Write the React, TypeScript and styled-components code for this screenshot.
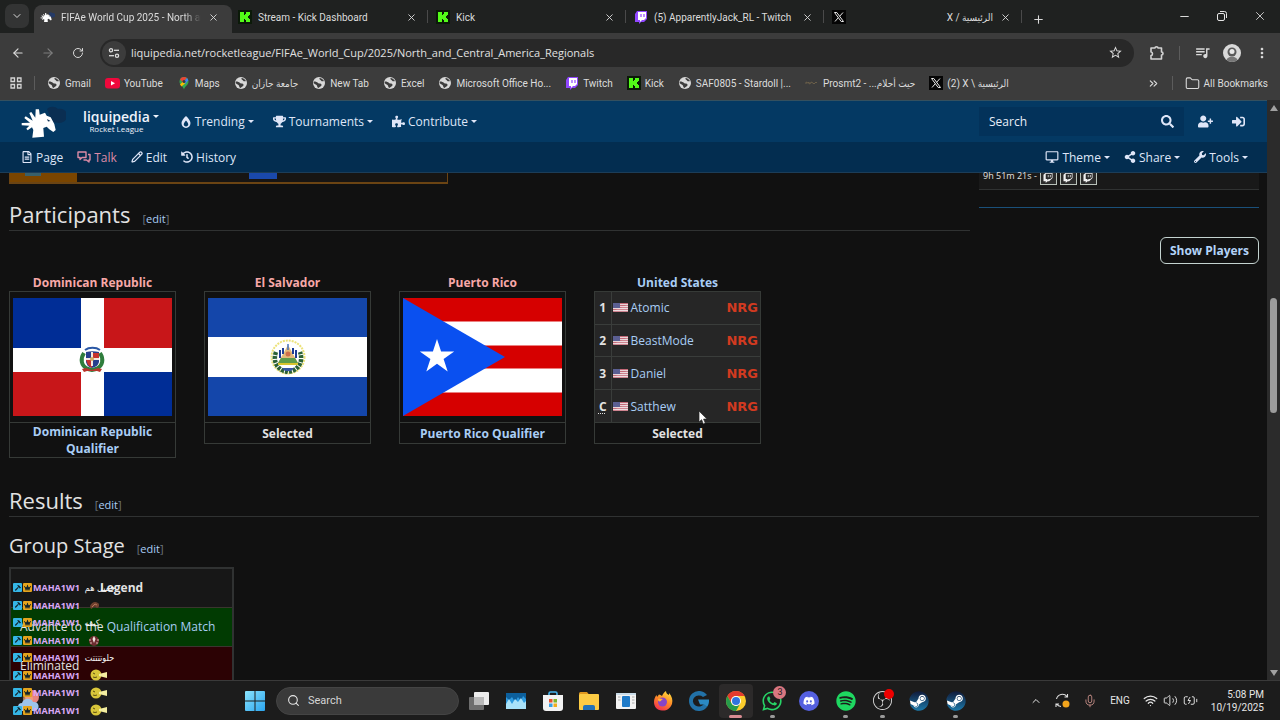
import React from 'react';
import styled, { createGlobalStyle } from 'styled-components';
import {
  FaBurn, FaTrophy, FaPuzzlePiece, FaSearch, FaUserPlus, FaSignInAlt, FaRegFileAlt,
  FaHistory, FaShareAlt, FaWrench, FaWhatsapp, FaDiscord, FaSpotify, FaSteam, FaTwitch, FaCrown, FaHammer,
} from 'react-icons/fa';
import {
  MdOutlineDesktopWindows, MdOutlineQueueMusic, MdStarOutline, MdMoreVert,
} from 'react-icons/md';
import {
  ArrowLeft, ArrowRight, RotateCw, X, Plus, Minus, ChevronDown, ChevronUp, Folder, Pencil, Mic, Wifi,
  Volume2, Search, BatteryCharging, ChevronsRight,
} from 'lucide-react';
import { SiObsstudio } from 'react-icons/si';

const UI = `Roboto, "DejaVu Sans Condensed", sans-serif`;
const WEB = `"Open Sans", "Noto Sans", sans-serif`;

const GlobalStyle = createGlobalStyle`
  *, *::before, *::after { box-sizing: border-box; }
  body { margin: 0; background: #111; color: #e2e2e2; font-family: ${WEB}; font-size: 12px; }
  button, input { font: inherit; color: inherit; background: none; border: 0; padding: 0; margin: 0; }
  a { color: #a9cdf5; text-decoration: none; }
  h1, h2, h3, p, ul { margin: 0; padding: 0; font-weight: 400; list-style: none; }
  svg { display: block; flex: none; }
`;

/* ---------- layout shell ---------- */
const Screen = styled.div`
  position: relative;
  height: 100vh;
  display: flex;
  flex-direction: column;
  overflow: hidden;
`;
const Browser = styled.div`
  background: #3c3c3c;
  color: #dcdcdc;
  font-family: ${UI};
  font-size: 10px;
`;
const IconButton = styled.button<{ $size?: number; $dim?: boolean }>`
  display: flex;
  align-items: center;
  justify-content: center;
  flex: none;
  width: ${(p) => p.$size ?? 24}px;
  height: ${(p) => p.$size ?? 24}px;
  color: ${(p) => (p.$dim ? '#7d7d7d' : '#dadada')};
`;

/* ---------- tab strip ---------- */
const TabStrip = styled.div`
  display: flex;
  align-items: flex-end;
  height: 33px;
  padding-left: 5px;
  background: #1f2120;
`;
const TabSearch = styled(IconButton)`
  margin: 0 5px 5px 0;
  border-radius: 7px;
  background: #333434;
`;
const Tab = styled.div<{ $active?: boolean; $divider?: boolean }>`
  position: relative;
  display: flex;
  align-items: center;
  gap: 6px;
  flex: 0 1 198px;
  min-width: 0;
  height: 28px;
  padding: 0 13px 4px 6px;
  border-radius: 8px 8px 0 0;
  background: ${(p) => (p.$active ? '#3c3c3c' : 'transparent')};
  &::after {
    content: '';
    display: ${(p) => (p.$divider ? 'block' : 'none')};
    position: absolute;
    right: 2px;
    top: 5px;
    width: 1px;
    height: 13px;
    background: #4a4a4a;
  }
`;
const TabTitle = styled.span<{ $fade?: boolean }>`
  flex: 1;
  min-width: 0;
  overflow: hidden;
  white-space: nowrap;
  ${(p) => p.$fade && 'mask-image: linear-gradient(90deg, #000 88%, transparent);'}
`;
const WindowControls = styled.div`
  display: flex;
  gap: 14px;
  margin-left: auto;
  padding: 0 8px 5px 0;
`;

/* ---------- toolbar ---------- */
const Toolbar = styled.div`
  display: flex;
  align-items: center;
  gap: 6px;
  height: 39px;
  padding: 0 6px;
`;
const Omnibox = styled.label`
  display: flex;
  align-items: center;
  flex: 1;
  height: 28px;
  margin: 0 5px 0 4px;
  padding: 0 7px 0 2px;
  border-radius: 14px;
  background: #282828;
`;
const SiteInfo = styled(IconButton)`
  border-radius: 50%;
  background: #3c3c3c;
`;
const Url = styled.input`
  flex: 1;
  min-width: 0;
  margin-left: 5px;
  font-family: ${WEB};
  font-size: 11px;
  color: #e0e0e0;
  outline: none;
`;
const Divider = styled.span<{ $space?: number }>`
  width: 1px;
  height: 14px;
  margin: 0 ${(p) => p.$space ?? 0}px;
  background: #5c5c5c;
`;
const Avatar = styled.span`
  display: block;
  width: 18px;
  height: 18px;
  border-radius: 50%;
  overflow: hidden;
  background: #d9d9d9;
`;

/* ---------- bookmarks ---------- */
const Bookmarks = styled.nav`
  display: flex;
  align-items: center;
  gap: 12px;
  height: 28px;
  padding: 0 12px 6px 10px;
  white-space: nowrap;
`;
const BookmarkList = styled.div`
  display: flex;
  gap: 14px;
`;
const Bookmark = styled.a`
  display: flex;
  align-items: center;
  gap: 4px;
  color: #dcdcdc;
`;
const BookmarksEnd = styled.div`
  display: flex;
  align-items: center;
  gap: 12px;
  margin-left: auto;
`;

/* ---------- wiki header ---------- */
const Viewport = styled.div`
  display: flex;
  flex: 1;
  min-height: 0;
`;
const Page = styled.div`
  flex: 1;
  min-width: 0;
  overflow: hidden;
  background: #111;
`;
const TopNav = styled.header`
  display: flex;
  align-items: center;
  height: 42px;
  padding: 0 22px 0 20px;
  border-top: 1px solid #34505f;
  background: #043963;
  color: #eef3fb;
`;
const SubNav = styled.nav`
  display: flex;
  align-items: center;
  justify-content: space-between;
  height: 31px;
  padding: 0 19px 0 21px;
  border-bottom: 1px solid #1c3d58;
  background: #032d50;
`;
const NavGroup = styled.div<{ $gap: number }>`
  display: flex;
  align-items: center;
  gap: ${(p) => p.$gap}px;
`;
const NavItem = styled.a<{ $tone?: string }>`
  display: flex;
  align-items: center;
  gap: 3px;
  color: ${(p) => p.$tone ?? '#dfe6f8'};
`;
const Caret = styled.span`
  border: 3px solid transparent;
  border-top-color: currentColor;
  border-bottom: 0;
`;
const Brand = styled.a`
  display: grid;
  grid-template-columns: auto auto;
  align-items: center;
  column-gap: 3px;
  margin: 0 21px 0 17px;
  color: #eef3fb;
`;
const BrandName = styled.strong`
  font-size: 14px;
  line-height: 15px;
  font-weight: 600;
`;
const BrandGame = styled.span`
  font-size: 8px;
  line-height: 10px;
  text-align: center;
`;
const SearchBox = styled.label`
  display: flex;
  align-items: center;
  width: 205px;
  height: 29px;
  margin: 0 14px 0 auto;
  padding: 0 10px;
  background: #03325a;
`;
const SearchInput = styled.input`
  flex: 1;
  min-width: 0;
  outline: none;
  &::placeholder { color: #e8eef8; opacity: 1; }
`;

/* ---------- article ---------- */
const Article = styled.main`
  padding: 0 8px 0 9px;
`;
const Lead = styled.div`
  display: grid;
  grid-template-columns: minmax(0, 1fr) 280px;
  column-gap: 9px;
`;
const PrizeRow = styled.div`
  display: grid;
  grid-template-columns: 67px 172px 28px 1fr;
  width: 439px;
  height: 11px;
  border: solid #6b4413;
  border-width: 0 1px 2px 1px;
  background: #171513;
`;
const PrizeCell = styled.span<{ $kind: 'place' | 'plain' | 'flag' }>`
  display: flex;
  justify-content: center;
  margin-bottom: ${(p) => (p.$kind === 'flag' ? 3 : 0)}px;
  background: ${(p) => ({ place: '#7a4500', plain: 'transparent', flag: '#1a49ab' })[p.$kind]};
`;
const PrizeMark = styled.span`
  width: 16px;
  height: 3px;
  margin-right: 22px;
  background: #38606b;
`;
const Infobox = styled.aside`
  align-self: start;
  padding-bottom: 17px;
  border-bottom: 1px solid #1a507a;
`;
const Countdown = styled.div`
  display: flex;
  gap: 3px;
  height: 17px;
  padding: 0 4px;
  border-bottom: 1px solid #303232;
  background: #191919;
  font-size: 9px;
  line-height: 5px;
`;
const StreamBadge = styled.a`
  display: flex;
  justify-content: center;
  width: 17px;
  height: 12px;
  border: 1px solid #b9c2ba;
  border-top: 0;
  background: #2c2c2c;
  color: #f0f0f0;
`;
const SectionHead = styled.div<{ $rule?: boolean; $space: number }>`
  display: flex;
  align-items: baseline;
  gap: 12px;
  margin-top: ${(p) => p.$space}px;
  border-bottom: ${(p) => (p.$rule ? '1px solid #303232' : '0')};
`;
const Heading = styled.h2<{ $minor?: boolean }>`
  font-size: ${(p) => (p.$minor ? 20 : 22)}px;
  line-height: 32px;
`;
const EditLink = styled.span`
  font-size: 11px;
  line-height: 14px;
  color: #707880;
`;
const Actions = styled.div`
  display: flex;
  justify-content: flex-end;
  margin-top: 6px;
`;
const OutlineButton = styled.button`
  height: 27px;
  padding: 0 9px;
  border: 1px solid #c4d3d0;
  border-radius: 6px;
  font-weight: 700;
  color: #b3d3f8;
`;
const Cards = styled.div`
  display: flex;
  flex-wrap: wrap;
  gap: 28px;
  align-items: flex-start;
  margin-top: 10px;
`;
const Card = styled.section`
  width: 167px;
  text-align: center;
  font-weight: 700;
  line-height: 17px;
`;
const CardTitle = styled.a<{ $missing?: boolean }>`
  display: block;
  color: ${(p) => (p.$missing ? '#f7a8a8' : '#a9cdf5')};
`;
const CardBox = styled.div`
  border: 1px solid #363a37;
`;
const Media = styled.div`
  display: flex;
  justify-content: center;
  padding: 6px 0;
`;
const CardFooter = styled.div`
  display: grid;
  align-content: center;
  min-height: 21px;
  padding: 0 12px;
  border-top: 1px solid #363a37;
`;
const Roster = styled.table`
  width: 100%;
  height: 130px;
  border-collapse: collapse;
  background: #262626;
  font-weight: 400;
  text-align: left;
  tr + tr { border-top: 1px solid #3a3d3b; }
  th { width: 16px; padding: 0; border-right: 1px solid #3a3d3b; text-align: center; }
  td { padding: 0 2px 0 1px; }
  abbr { text-decoration: underline dotted; text-underline-offset: 2px; }
`;
const Player = styled.div`
  display: flex;
  align-items: center;
  gap: 3px;
`;
const TeamMark = styled.a`
  margin-left: auto;
  font: 700 13px "DejaVu Sans", sans-serif;
  color: #d23a20;
`;
const LegendTable = styled.table`
  width: 225px;
  margin-top: 5px;
  border-collapse: collapse;
  border: 2px solid #303232;
  border-bottom: 0;
`;
const LegendRow = styled.tr<{ $bg?: string }>`
  height: 39px;
  background: ${(p) => p.$bg ?? '#171717'};
  th, td { padding: 0 9px; border-bottom: 1px solid #3b352f; white-space: nowrap; }
`;

/* ---------- scrollbar ---------- */
const ScrollTrack = styled.div`
  display: flex;
  flex-direction: column;
  align-items: center;
  justify-content: space-between;
  width: 13px;
  padding: 5px 0 4px;
  background: #2b2b2b;
`;
const ScrollArrow = styled.span<{ $down?: boolean }>`
  border: 4px solid transparent;
  border-${(p) => (p.$down ? 'top' : 'bottom')}: 6px solid #a0a0a0;
  border-${(p) => (p.$down ? 'bottom' : 'top')}: 0;
`;
const ScrollThumb = styled.span`
  width: 7px;
  height: 115px;
  margin-bottom: 70px;
  border-radius: 4px;
  background: #9c9c9c;
`;

/* ---------- taskbar ---------- */
const Taskbar = styled.footer`
  display: flex;
  align-items: center;
  height: 40px;
  padding: 0 16px 0 18px;
  border-top: 1px solid #3a3a3a;
  background: #1c1c1c;
  color: #e6e6e6;
  font-family: ${UI};
  font-size: 10px;
`;
const Weather = styled(IconButton)`
  margin-right: 198px;
`;
const TaskSearch = styled.label`
  display: flex;
  align-items: center;
  gap: 8px;
  width: 183px;
  height: 28px;
  margin: 0 2px 0 4px;
  padding: 0 10px;
  border: 1px solid #444;
  border-radius: 14px;
  background: #3a3a3a;
`;
const TaskSearchInput = styled.input`
  width: 100%;
  font-size: 11px;
  outline: none;
  &::placeholder { color: #d5d5d5; opacity: 1; }
`;
const Apps = styled.div`
  display: grid;
  grid-template-columns: repeat(14, 1fr);
  width: 513px;
`;
const AppButton = styled.button<{ $active?: boolean; $running?: boolean }>`
  position: relative;
  display: flex;
  align-items: center;
  justify-content: center;
  justify-self: center;
  width: 34px;
  height: 34px;
  border-radius: 4px;
  background: ${(p) => (p.$active ? '#2c2a2a' : 'transparent')};
  &::after {
    content: '';
    display: ${(p) => (p.$running || p.$active ? 'block' : 'none')};
    position: absolute;
    bottom: 0;
    width: ${(p) => (p.$active ? 13 : 5)}px;
    height: 3px;
    border-radius: 2px;
    background: ${(p) => (p.$active ? '#d98c92' : '#9a9a9a')};
  }
`;
const CountBadge = styled.span<{ $solid?: boolean }>`
  position: absolute;
  top: ${(p) => (p.$solid ? 5 : 2)}px;
  right: ${(p) => (p.$solid ? 5 : 3)}px;
  width: ${(p) => (p.$solid ? 10 : 13)}px;
  height: ${(p) => (p.$solid ? 10 : 13)}px;
  border-radius: 50%;
  background: ${(p) => (p.$solid ? '#f00000' : '#d97680')};
  color: #1c1c1c;
  font-size: 9px;
  line-height: 13px;
`;
const Tray = styled.div`
  display: flex;
  align-items: center;
  gap: 13px;
  margin-left: auto;
`;
const TrayStatus = styled.div`
  display: flex;
  gap: 5px;
`;
const Clock = styled.time`
  text-align: right;
  line-height: 13px;
`;

/* ---------- floating layers ---------- */
const ChatOverlay = styled.ul`
  position: absolute;
  left: 13px;
  bottom: 1px;
  display: grid;
  grid-auto-rows: 1fr;
  height: 140px;
  font-size: 9px;
`;
const ChatLine = styled.li`
  display: flex;
  align-items: center;
`;
const ChatBadge = styled.span<{ $bg: string }>`
  display: flex;
  align-items: center;
  justify-content: center;
  width: 9px;
  height: 9px;
  margin-right: 1px;
  border-radius: 1px;
  background: ${(p) => p.$bg};
  color: #12242c;
`;
const ChatName = styled.strong`
  margin-right: 5px;
  color: #d9a9f7;
`;
const ChatText = styled.span`
  font: 400 9px/14px "DejaVu Sans Condensed", sans-serif;
  color: #f4f4f4;
`;
const Pointer = styled.svg`
  position: absolute;
  left: 698px;
  top: 410px;
`;

/* ---------- drawings ---------- */
const KickIcon = () => (
  <svg width="14" height="14" viewBox="0 0 14 14">
    <rect width="14" height="14" fill="#0b1a08" />
    <path d="M2 2h4v3h1V4h1V2h4v3h-1v1h-1v2h1v1h1v3H8v-2H7V9H6v3H2z" fill="#53fc18" />
  </svg>
);
const TwitchIcon = () => (
  <svg width="14" height="14" viewBox="0 0 14 14">
    <path d="M3 1h10v8l-3 3H7l-2 2v-2H1V4z" fill="#9147ff" />
    <path d="M4 2h8v6l-2 2H8l-2 2v-2H4z" fill="#fff" />
    <path d="M7 4v3M10 4v3" stroke="#9147ff" strokeWidth="1.2" />
  </svg>
);
const XIcon = () => (
  <svg width="14" height="14" viewBox="0 0 14 14">
    <rect width="14" height="14" fill="#050505" />
    <path d="M2.500 2.500h2.300l6.700 9H9.200z" fill="none" stroke="#e8e8e8" />
    <path d="M11 2.500 7.600 6.300M6.200 7.800 3 11.500" stroke="#e8e8e8" />
  </svg>
);
const GlobeIcon = () => (
  <svg width="14" height="14" viewBox="0 0 14 14">
    <circle cx="7" cy="7" r="6" fill="#d8d8d8" />
    <path d="M2 5.500c2 0 3 .5 4 1.500s3 0 3.500 1.500S8 10.500 6.500 12C5 11.800 5.500 10 4.500 9S2 8 1.500 7zM7.500 2c-.5 1.500 1 1.500 1.500 2.500s2 1 3 .5C11 3.500 9.500 2 7.500 2z" fill="#3c3c3c" />
  </svg>
);
const YouTubeIcon = () => (
  <svg width="15" height="14" viewBox="0 0 15 14">
    <rect y="2" width="15" height="10.500" rx="3" fill="#f0083c" />
    <path d="M6 5v4.500l4-2.200z" fill="#fff" />
  </svg>
);
const MapsIcon = () => (
  <svg width="14" height="14" viewBox="0 0 14 14">
    <path d="M7 1a4.500 4.500 0 0 1 4.500 4.500C11.500 9 8 10 7 13.500 6 10 2.500 9 2.500 5.500A4.500 4.500 0 0 1 7 1z" fill="#34a853" />
    <path d="M7 1a4.500 4.500 0 0 0-4 2.300L5.500 6 10 2.100A4.500 4.500 0 0 0 7 1z" fill="#ea4335" />
    <path d="m10 2-4 4.500 2 1.500 3.300-3.500C11 3.200 10.600 2.600 10 2z" fill="#4285f4" />
    <path d="M3 8.500 6 5.500l2 2-3.500 3z" fill="#fbbc04" />
    <circle cx="7" cy="5.500" r="1.500" fill="#3c3c3c" />
  </svg>
);
const FaintIcon = () => (
  <svg width="14" height="14" viewBox="0 0 14 14">
    <path d="M1 8V6l2 1 1-1v2l2-1V6l2 1 1 1 2-2 1 1" fill="none" stroke="#6b5f48" />
  </svg>
);
const AppsGridIcon = () => (
  <svg width="12" height="12" viewBox="0 0 12 12" fill="none" stroke="#d4d4d4" strokeWidth="1.300">
    <path d="M1 1h3.500v3.500H1zM7.500 1H11v3.500H7.500zM1 7.500h3.500V11H1zM7.500 7.500H11V11H7.500z" />
  </svg>
);
const TuneIcon = () => (
  <svg width="12" height="12" viewBox="0 0 12 12" fill="none" stroke="#dcdcdc" strokeWidth="1.300">
    <circle cx="3" cy="3.300" r="1.600" /><path d="M6 3.300h5" /><circle cx="9" cy="8.700" r="1.600" /><path d="M1 8.700h5" />
  </svg>
);
const ExtensionsIcon = () => (
  <svg width="16" height="16" viewBox="0 0 16 16" fill="none" stroke="#d4d4d4" strokeWidth="1.600" strokeLinejoin="round">
    <path d="M2 3h4c0-1.600 3-1.600 3 0h3.500v4c2 0 2 3 0 3v4H2v-3.500c2 0 2-3.500 0-3.500z" />
  </svg>
);
const RestoreIcon = () => (
  <svg width="10" height="10" viewBox="0 0 10 10" fill="none" stroke="#e6e6e6">
    <rect x=".5" y="2.500" width="7" height="7" rx="1.500" /><path d="M3 .5h4.500a2 2 0 0 1 2 2V7" />
  </svg>
);
const TalkIcon = () => (
  <svg width="14" height="12" viewBox="0 0 14 12" fill="none" stroke="#dc8ba6" strokeWidth="1.400" strokeLinejoin="round">
    <path d="M1 1h8v5.500H5L3 8.500v-2H1z" /><path d="M11 3.500h2V9h-1v2L9.500 9H6.500" />
  </svg>
);
const HorseHead = ({ size, fill, shade }: { size: number; fill: string; shade: string }) => (
  <svg width={size} height={(size * 32) / 46} viewBox="0 0 46 32">
    <path d="M27 3c3-3 8-3 11 0 4-1 8 1 9 5 1 5-3 9-8 9l-6-1-3-6z" fill={shade} />
    <path d="M15.700 3.300 19 3.300 19.700 8.700 25 6.700 26.700 9.700 30.700 11.300 34.300 18 35.700 24 33.300 26 29.300 23.300 26.700 20.700 23.300 22 24 30.700 12.300 31.700 13.300 24 12 21.300 7.700 24.300 6.300 22.700 9.300 19.700 1.700 19.300 1.700 17 10 16.700 4.300 12 5.700 10.300 12.700 14.700 9.300 7 11.300 6 15.300 11.700z" fill={fill} />
    <path d="m27 13 3.500 2-2.500.5z" fill={shade} />
  </svg>
);
const UsFlag = () => (
  <svg width="15" height="9" viewBox="0 0 15 9">
    <rect width="15" height="9" fill="#e9d5d8" />
    <path d="M0 .5h15M0 2.500h15M0 4.500h15M0 6.500h15M0 8.500h15" stroke="#c46a78" />
    <rect width="7" height="5" fill="#5b5f92" />
    <path d="M0 9C5 4 10 5 15 1v8z" fill="#fff" opacity=".18" />
  </svg>
);
const DominicanFlag = () => (
  <svg width="159" height="118" viewBox="0 0 159 118" role="img" aria-label="Dominican Republic">
    <rect width="159" height="118" fill="#fff" />
    <path d="M0 0h68v50H0zM91 74h68v44H91z" fill="#002d96" />
    <path d="M91 0h68v50H91zM0 74h68v44H0z" fill="#c81619" />
    <path d="M71 55c-4 6-3 13 4 16l4 1 4-1c7-3 8-10 4-16" fill="none" stroke="#2f7d3c" strokeWidth="4" />
    <path d="M73 54c4-1 9-1 13 0v10c-1 4-4 5-7 6-3-1-5-2-6-6z" fill="#263f8c" />
    <path d="M79 55h7v6h-7zM73 62h6v8l-4-3z" fill="#c7332e" />
    <path d="M73 60h13v2H73zM78 54h2v14h-2z" fill="#f3e7df" /><circle cx="79" cy="61" r="2" fill="#d3ac62" />
    <path d="M72 52c4-3 11-3 15 0" fill="none" stroke="#2a57a5" strokeWidth="2" />
    <path d="m69 71 4-1 6 2 6-2 4 1-2 3-3-1h-10l-3 1z" fill="#b5352b" />
  </svg>
);
const SalvadorFlag = () => (
  <svg width="159" height="118" viewBox="0 0 159 118" role="img" aria-label="El Salvador">
    <rect width="159" height="118" fill="#1446aa" />
    <rect y="39" width="159" height="40" fill="#fff" />
    <circle cx="80" cy="59" r="16.500" fill="none" stroke="#ece27a" strokeWidth="2" strokeDasharray="2 1" />
    <path d="M68 54c-3 8 0 16 8 19l4 1 4-1c8-3 11-11 8-19" fill="none" stroke="#2c6136" strokeWidth="4.500" strokeDasharray="3 1" />
    <path d="m80 47 10 18H70z" fill="#e2b97a" />
    <path d="M73 60h14l3 5H70z" fill="#5f9c4a" /><path d="M70 65h20v2H70z" fill="#d9c52e" />
    <path d="M72 52v8M75 50v6M88 52v8M85 50v6" stroke="#1d3c94" strokeWidth="2" />
    <path d="M80 46v6" stroke="#4576c5" strokeWidth="1.500" /><circle cx="80" cy="56" r="2.500" fill="#cf6f4c" />
    <path d="M74 70h12l-3 3h-6z" fill="#3657a0" />
  </svg>
);
const PuertoRicoFlag = () => (
  <svg width="159" height="118" viewBox="0 0 159 118" role="img" aria-label="Puerto Rico">
    <rect width="159" height="118" fill="#d60000" />
    <path d="M0 23.500h159v24H0zM0 70.500h159v24H0z" fill="#fff" />
    <path d="M0 0 102 59 0 118z" fill="#0a50f0" />
    <path d="m34 41 4.100 12.400h13.100L40.600 61l4.100 12.400L34 65.800l-10.700 7.600L27.400 61l-10.600-7.600h13.100z" fill="#fff" />
  </svg>
);
const WeatherIcon = () => (
  <svg width="22" height="24" viewBox="0 0 22 24">
    <circle cx="14" cy="8" r="7" fill="#e8837f" /><circle cx="10" cy="10" r="5" fill="#f0a87a" opacity=".7" />
    <path d="M4 22a4 4 0 0 1 0-8 6 6 0 0 1 11-1 4.500 4.500 0 0 1 2 9z" fill="#9cc4ee" />
  </svg>
);
const WindowsIcon = () => (
  <svg width="20" height="20" viewBox="0 0 20 20">
    <defs><linearGradient id="win" x2="1" y2="1"><stop stopColor="#8be4fd" /><stop offset="1" stopColor="#2aa4ee" /></linearGradient></defs>
    <path d="M0 1q0-1 1-1h8.500v9.500H0zM10.500 0H19q1 0 1 1v8.500h-9.500zM0 10.500h9.500V20H1q-1 0-1-1zM10.500 10.500H20V19q0 1-1 1h-8.500z" fill="url(#win)" />
  </svg>
);
const TaskViewIcon = () => (
  <svg width="20" height="20" viewBox="0 0 20 20">
    <rect x="5" y="1" width="15" height="13" rx="1" fill="#ededed" /><rect y="6" width="15" height="13" rx="1" fill="#7c7c7c" opacity=".85" />
    <path d="M5 6h10v8H5z" fill="#b9b9b9" />
  </svg>
);
const MonitorIcon = () => (
  <svg width="20" height="20" viewBox="0 0 20 20">
    <rect y="2" width="20" height="16" rx="1" fill="#2f9be0" /><path d="M0 2h20v6l-3-3-2 5-3-4-3 5-3-5-3 3-3-3z" fill="#0c5f9c" />
    <path d="m0 13 3-5 3 5 3-5 3 3 3-4 3 5 2-2v8H0z" fill="#a9e2fa" />
  </svg>
);
const StoreIcon = () => (
  <svg width="20" height="20" viewBox="0 0 20 20">
    <path d="M6 5V2.500Q6 1 7.500 1h5Q14 1 14 2.500V5" fill="none" stroke="#45b4ee" strokeWidth="1.600" />
    <path d="M0 4h20v13q0 3-3 3H3q-3 0-3-3z" fill="#f2f2f2" />
    <path d="M6 8h3.500v3.500H6z" fill="#e8502d" /><path d="M10.500 8H14v3.500h-3.500z" fill="#7db52b" />
    <path d="M6 12.500h3.500V16H6z" fill="#37a0e6" /><path d="M10.500 12.500H14V16h-3.500z" fill="#f3ad1c" />
  </svg>
);
const ExplorerIcon = () => (
  <svg width="20" height="20" viewBox="0 0 20 20">
    <path d="M0 2.500Q0 1 1.500 1H8l2 2.500H0z" fill="#e0981e" /><path d="M0 4q0-1 1-1h18q1 0 1 1v14q0 1-1 1H1q-1 0-1-1z" fill="#fccb44" />
    <path d="M4 19v-3q0-2 2-2h8q2 0 2 2v3z" fill="#2172b8" />
  </svg>
);
const NewsIcon = () => (
  <svg width="20" height="20" viewBox="0 0 20 20">
    <rect y="2" width="20" height="16" rx="1" fill="#f3f3f3" /><path d="M0 3q0-1 1-1h18q1 0 1 1v1H0z" fill="#c9dce9" />
    <rect x="6" y="5" width="8" height="11" rx="1" fill="#1f7bc9" /><path d="M2 6h2.500M2 9h2.500M16 6h2.500M16 9h2.500M16 12h2.500" stroke="#aaa" />
  </svg>
);
const FirefoxIcon = () => (
  <svg width="20" height="20" viewBox="0 0 20 20">
    <defs><linearGradient id="ff" x1=".8" x2=".3" y2="1"><stop stopColor="#ffe23e" /><stop offset=".5" stopColor="#ff8a27" /><stop offset="1" stopColor="#f0304f" /></linearGradient></defs>
    <path d="M13 0c0 2 1 3 3 4V2c3 3 4 7 3 11-2 5-6 7-10 6.500C4 19 1 16 1 11c0-3 1-5 2.500-7L4 6l2-2.500C7 4 8 4 9 5c1-2 2-4 4-5z" fill="url(#ff)" />
    <circle cx="9.500" cy="11" r="4.500" fill="#8645c8" /><path d="M5 8c2-1 3 0 5 0-1 1-2 1-2 2-2 1-3 0-3-2z" fill="#ffb33b" />
  </svg>
);
const GIcon = () => (
  <svg width="20" height="20" viewBox="0 0 20 20">
    <path d="M18 4A10 10 0 1 0 18 16L15 13A6 5.500 0 1 1 14 6z" fill="#2272a8" />
    <path d="M9 8.500h11c.2 3-.5 5.500-2 7.500l-3-2.500H11z" fill="#2b8ac4" />
  </svg>
);
const ChromeIcon = () => (
  <svg width="20" height="20" viewBox="0 0 20 20">
    <circle cx="10" cy="10" r="10" fill="#fccd2c" />
    <path d="M1.340 5A10 10 0 0 1 18.660 5H10a5 5 0 0 0-4.330 7.500z" fill="#e33b2e" />
    <path d="M1.340 5A10 10 0 0 0 10 20l4.330-7.500A5 5 0 0 1 5.670 12.500z" fill="#269b4b" />
    <circle cx="10" cy="10" r="5" fill="#fff" /><circle cx="10" cy="10" r="4" fill="#2f74de" />
  </svg>
);
const SyncIcon = () => (
  <svg width="15" height="15" viewBox="0 0 15 15" fill="none" stroke="#e0e0e0" strokeWidth="1.100">
    <path d="M1.500 6A6 6 0 0 1 12 3.500M12.500 1v3h-3M1 14v-3h3M1.500 11A6 6 0 0 0 6 13.500" /><circle cx="11" cy="11" r="3.500" fill="#f2a41c" stroke="none" />
  </svg>
);
const Lamp = () => (
  <svg width="24" height="12" viewBox="-5 0 24 12">
    <circle cx="6" cy="6" r="5.500" fill="#d8c53a" /><path d="M9 5l8-2v6l-8-2z" fill="#f3eda0" />
    <path d="M3 4l2 1M3 8q2 1 4 0" stroke="#5b4d12" fill="none" />
  </svg>
);
const BrownEmote = () => (
  <svg width="16" height="10" viewBox="-4 0 16 10"><path d="M1 6c2-4 5-5 8-3 2 1 1 5-1 5-3-3-4 0-6 1z" fill="#70402e" /><path d="M3 7l3-3 2 1" stroke="#b3775c" fill="none" /></svg>
);
const RedEmote = () => (
  <svg width="15" height="12" viewBox="-3 0 15 12"><circle cx="6" cy="7" r="5" fill="#6d2c30" /><path d="M6 2l1.500 3L6 9 4.500 5z" fill="#f2e6e0" /><path d="M1 6h2M9 6h2M2 9h2M8 9h2" stroke="#d9b5ae" /></svg>
);
const DiscordIcon = () => (
  <svg width="20" height="20" viewBox="0 0 20 20">
    <circle cx="10" cy="10" r="10" fill="#5560e0" />
    <FaDiscord x="4" y="4" size={12} color="#fff" />
  </svg>
);
const SteamIcon = () => (
  <svg width="20" height="20" viewBox="0 0 20 20">
    <defs><linearGradient id="st" x2="0" y2="1"><stop stopColor="#101a3a" /><stop offset="1" stopColor="#1c78a8" /></linearGradient></defs>
    <circle cx="10" cy="10" r="9" fill="#fff" />
    <FaSteam x="0" y="0" size={20} fill="url(#st)" />
  </svg>
);

/* ---------- data ---------- */
const tabs = [
  { icon: <HorseHead size={15} fill="#fff" shade="#243a66" />, title: 'FIFAe World Cup 2025 - North and Central', active: true },
  { icon: <KickIcon />, title: 'Stream - Kick Dashboard', divider: true },
  { icon: <KickIcon />, title: 'Kick', divider: true },
  { icon: <TwitchIcon />, title: '(5) ApparentlyJack_RL - Twitch', divider: true },
  { icon: <XIcon />, title: 'الرئيسية / X', divider: true, rtl: true },
];
const bookmarks = [
  { icon: <GlobeIcon />, label: 'Gmail' },
  { icon: <YouTubeIcon />, label: 'YouTube' },
  { icon: <MapsIcon />, label: 'Maps' },
  { icon: <GlobeIcon />, label: 'جامعة جازان' },
  { icon: <GlobeIcon />, label: 'New Tab' },
  { icon: <GlobeIcon />, label: 'Excel' },
  { icon: <GlobeIcon />, label: 'Microsoft Office Ho...' },
  { icon: <TwitchIcon />, label: 'Twitch' },
  { icon: <KickIcon />, label: 'Kick' },
  { icon: <GlobeIcon />, label: 'SAF0805 - Stardoll |...' },
  { icon: <FaintIcon />, label: <>Prosmt2 - <bdi dir="rtl">حيث أحلام...</bdi></> },
  { icon: <XIcon />, label: '(2) X \\ الرئيسية' },
];
const flagCards = [
  { name: 'Dominican Republic', flag: <DominicanFlag />, footer: <a href="#dr">Dominican Republic Qualifier</a> },
  { name: 'El Salvador', flag: <SalvadorFlag />, footer: 'Selected' },
  { name: 'Puerto Rico', flag: <PuertoRicoFlag />, footer: <a href="#pr">Puerto Rico Qualifier</a> },
];
const players = [['1', 'Atomic'], ['2', 'BeastMode'], ['3', 'Daniel'], ['C', 'Satthew']];
const apps: { name: string; icon: React.ReactNode; active?: boolean; running?: boolean; badge?: string }[] = [
  { name: 'Task view', icon: <TaskViewIcon /> },
  { name: 'Monitor', icon: <MonitorIcon /> },
  { name: 'Store', icon: <StoreIcon /> },
  { name: 'Explorer', icon: <ExplorerIcon /> },
  { name: 'News', icon: <NewsIcon /> },
  { name: 'Firefox', icon: <FirefoxIcon /> },
  { name: 'G Hub', icon: <GIcon /> },
  { name: 'Chrome', icon: <ChromeIcon />, active: true },
  { name: 'WhatsApp', icon: <FaWhatsapp size={22} color="#27d366" />, running: true, badge: '3' },
  { name: 'Discord', icon: <DiscordIcon /> },
  { name: 'Spotify', icon: <FaSpotify size={20} color="#1ed760" />, running: true },
  { name: 'OBS', icon: <SiObsstudio size={19} color="#d8d8d8" />, running: true, badge: '' },
  { name: 'Steam', icon: <SteamIcon /> },
  { name: 'Steam game', icon: <SteamIcon />, running: true },
];
const chat: React.ReactNode[] = [
  <ChatText dir="rtl">جميل هم</ChatText>, <BrownEmote />, <ChatText dir="rtl">كيف</ChatText>, <RedEmote />,
  <ChatText dir="rtl">حلوتتتتت</ChatText>, <Lamp />, <Lamp />, <Lamp />,
];

const Head = ({ title, space, minor }: { title: string; space: number; minor?: boolean }) => (
  <SectionHead $space={space} $rule={!minor}>
    <Heading as={minor ? 'h3' : 'h2'} $minor={minor}>{title}</Heading>
    <EditLink>[<a href="#edit">edit</a>]</EditLink>
  </SectionHead>
);

export default function App() {
  return (
    <Screen>
      <GlobalStyle />
      <Browser>
        <TabStrip>
          <TabSearch aria-label="Search tabs"><ChevronDown size={12} /></TabSearch>
          {tabs.map((t, i) => (
            <Tab key={i} $active={t.active} $divider={t.divider}>
              {t.icon}
              <TabTitle $fade={t.active} dir={t.rtl ? 'rtl' : 'ltr'}>{t.title}</TabTitle>
              <IconButton $size={12} aria-label="Close tab"><X size={11} /></IconButton>
            </Tab>
          ))}
          <IconButton $size={28} aria-label="New tab"><Plus size={13} /></IconButton>
          <WindowControls>
            <IconButton aria-label="Minimize"><Minus size={13} /></IconButton>
            <IconButton aria-label="Restore"><RestoreIcon /></IconButton>
            <IconButton aria-label="Close"><X size={14} strokeWidth={1.500} /></IconButton>
          </WindowControls>
        </TabStrip>
        <Toolbar>
          <IconButton aria-label="Back"><ArrowLeft size={14} /></IconButton>
          <IconButton $dim aria-label="Forward"><ArrowRight size={14} /></IconButton>
          <IconButton aria-label="Reload"><RotateCw size={12} /></IconButton>
          <Omnibox>
            <SiteInfo aria-label="Site information"><TuneIcon /></SiteInfo>
            <Url aria-label="Address" defaultValue="liquipedia.net/rocketleague/FIFAe_World_Cup/2025/North_and_Central_America_Regionals" />
            <IconButton aria-label="Bookmark this page"><MdStarOutline size={15} /></IconButton>
          </Omnibox>
          <IconButton aria-label="Extensions"><ExtensionsIcon /></IconButton>
          <Divider $space={4} />
          <IconButton aria-label="Media"><MdOutlineQueueMusic size={17} /></IconButton>
          <IconButton aria-label="Profile">
            <Avatar>
              <svg width="18" height="18" viewBox="0 0 18 18">
                <circle cx="9" cy="8" r="4.500" fill="#5a5a5a" /><circle cx="9" cy="7.500" r="2.500" fill="#e8e8e8" /><path d="M3 18c0-7 12-7 12 0z" fill="#777" />
              </svg>
            </Avatar>
          </IconButton>
          <IconButton aria-label="Menu"><MdMoreVert size={16} /></IconButton>
        </Toolbar>
        <Bookmarks>
          <AppsGridIcon />
          <Divider />
          <BookmarkList>
            {bookmarks.map((b, i) => (
              <Bookmark key={i} href="#bookmark">{b.icon}<span>{b.label}</span></Bookmark>
            ))}
          </BookmarkList>
          <BookmarksEnd>
            <ChevronsRight size={13} />
            <Divider />
            <Bookmark href="#all"><Folder size={15} strokeWidth={1.700} /><span>All Bookmarks</span></Bookmark>
          </BookmarksEnd>
        </Bookmarks>
      </Browser>

      <Viewport>
        <Page>
          <TopNav>
            <HorseHead size={46} fill="#fff" shade="#0a2e52" />
            <Brand href="#home">
              <BrandName>liquipedia</BrandName><Caret />
              <BrandGame>Rocket League</BrandGame>
            </Brand>
            <NavGroup $gap={19}>
              <NavItem href="#trending"><FaBurn size={12} />Trending<Caret /></NavItem>
              <NavItem href="#tournaments"><FaTrophy size={13} />Tournaments<Caret /></NavItem>
              <NavItem href="#contribute"><FaPuzzlePiece size={13} />Contribute<Caret /></NavItem>
            </NavGroup>
            <SearchBox>
              <SearchInput aria-label="Search the wiki" placeholder="Search" />
              <FaSearch size={13} color="#dfe6f8" />
            </SearchBox>
            <NavGroup $gap={19}>
              <NavItem href="#join" aria-label="Create account"><FaUserPlus size={15} /></NavItem>
              <NavItem href="#login" aria-label="Log in"><FaSignInAlt size={13} /></NavItem>
            </NavGroup>
          </TopNav>
          <SubNav>
            <NavGroup $gap={14}>
              <NavItem href="#page"><FaRegFileAlt size={12} />Page</NavItem>
              <NavItem href="#talk" $tone="#dc8ba6"><TalkIcon />Talk</NavItem>
              <NavItem href="#edit"><Pencil size={12} strokeWidth={2.500} />Edit</NavItem>
              <NavItem href="#history"><FaHistory size={12} />History</NavItem>
            </NavGroup>
            <NavGroup $gap={14}>
              <NavItem href="#theme"><MdOutlineDesktopWindows size={14} />Theme<Caret /></NavItem>
              <NavItem href="#share"><FaShareAlt size={12} />Share<Caret /></NavItem>
              <NavItem href="#tools"><FaWrench size={12} />Tools<Caret /></NavItem>
            </NavGroup>
          </SubNav>

          <Article>
            <Lead>
              <div>
                <PrizeRow>
                  <PrizeCell $kind="place"><PrizeMark /></PrizeCell>
                  <PrizeCell $kind="plain" />
                  <PrizeCell $kind="flag" />
                </PrizeRow>
                <Head title="Participants" space={14} />
              </div>
              <Infobox>
                <Countdown>
                  9h 51m 21s -
                  {[0, 1, 2].map((n) => (
                    <StreamBadge key={n} href="#stream" aria-label="Twitch stream"><FaTwitch size={10} /></StreamBadge>
                  ))}
                </Countdown>
              </Infobox>
            </Lead>
            <Actions><OutlineButton>Show Players</OutlineButton></Actions>
            <Cards>
              {flagCards.map((c) => (
                <Card key={c.name}>
                  <CardTitle href="#team" $missing>{c.name}</CardTitle>
                  <CardBox>
                    <Media>{c.flag}</Media>
                    <CardFooter>{c.footer}</CardFooter>
                  </CardBox>
                </Card>
              ))}
              <Card>
                <CardTitle href="#usa">United States</CardTitle>
                <CardBox>
                  <Roster>
                    <tbody>
                      {players.map(([slot, name]) => (
                        <tr key={name}>
                          <th scope="row">{slot === 'C' ? <abbr title="Coach">C</abbr> : slot}</th>
                          <td>
                            <Player><UsFlag /><a href="#player">{name}</a><TeamMark href="#nrg">NRG</TeamMark></Player>
                          </td>
                        </tr>
                      ))}
                    </tbody>
                  </Roster>
                  <CardFooter>Selected</CardFooter>
                </CardBox>
              </Card>
            </Cards>
            <Head title="Results" space={26} />
            <Head title="Group Stage" space={13} minor />
            <LegendTable>
              <tbody>
                <LegendRow><th>Legend</th></LegendRow>
                <LegendRow $bg="#013b02"><td>Advance to the <a href="#match">Qualification Match</a></td></LegendRow>
                <LegendRow $bg="#2c0204"><td>Eliminated</td></LegendRow>
              </tbody>
            </LegendTable>
          </Article>
        </Page>
        <ScrollTrack><ScrollArrow /><ScrollThumb /><ScrollArrow $down /></ScrollTrack>
      </Viewport>

      <Taskbar>
        <Weather $size={22} aria-label="Weather"><WeatherIcon /></Weather>
        <AppButton aria-label="Start"><WindowsIcon /></AppButton>
        <TaskSearch>
          <Search size={13} />
          <TaskSearchInput aria-label="Search the computer" placeholder="Search" />
        </TaskSearch>
        <Apps>
          {apps.map((a) => (
            <AppButton key={a.name} aria-label={a.name} $active={a.active} $running={a.running}>
              {a.icon}
              {a.badge !== undefined && <CountBadge $solid={!a.badge}>{a.badge}</CountBadge>}
            </AppButton>
          ))}
        </Apps>
        <Tray>
          <ChevronUp size={12} />
          <SyncIcon />
          <Mic size={14} strokeWidth={1.500} color="#c99089" />
          <span>ENG</span>
          <TrayStatus><Wifi size={15} /><Volume2 size={15} strokeWidth={1.500} /><BatteryCharging size={15} strokeWidth={1.500} /></TrayStatus>
          <Clock>5:08 PM<br />10/19/2025</Clock>
        </Tray>
      </Taskbar>

      <ChatOverlay>
        {chat.map((message, i) => (
          <ChatLine key={i}>
            <ChatBadge $bg="#35b6e6"><FaHammer size={6} /></ChatBadge>
            <ChatBadge $bg="#e5a41d"><FaCrown size={7} /></ChatBadge>
            <ChatName>MAHA1W1</ChatName>
            {message}
          </ChatLine>
        ))}
      </ChatOverlay>
      <Pointer width="11" height="15" viewBox="0 0 11 15">
        <path d="M1 1v11l2.600-2.300L5.300 14l2-.9-1.700-4H9z" fill="#fff" stroke="#222" strokeWidth=".7" />
      </Pointer>
    </Screen>
  );
}
